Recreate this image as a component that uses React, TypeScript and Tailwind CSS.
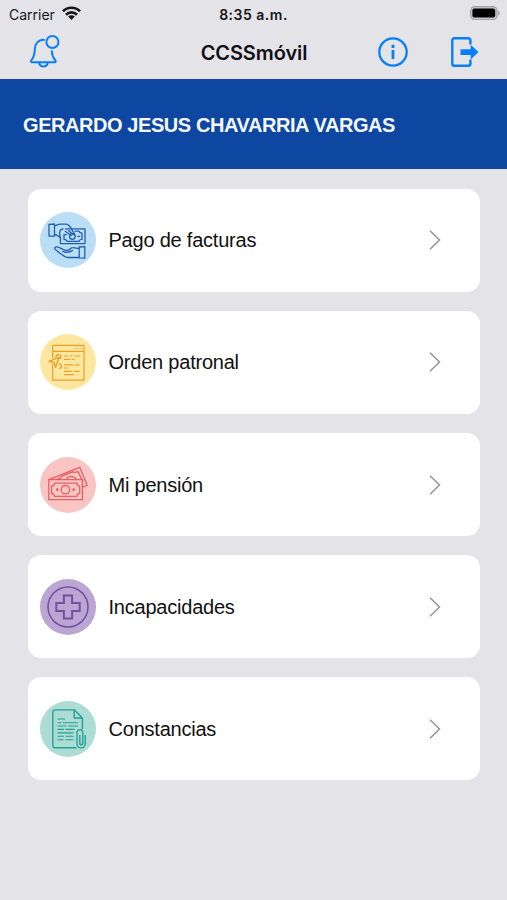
import React from 'react';

function StatusBar() {
  return (
    <div className="flex h-7 items-center justify-between pl-[9px] pr-[7px] text-[#17171a]">
      <div className="flex w-[160px] items-center gap-[6px]">
        <span className="w-[47px] whitespace-nowrap font-['Inter',sans-serif] text-[14px]">Carrier</span>
        <svg className="h-[14px] w-[19px] shrink-0 -translate-y-px" viewBox="0 0 19 14" fill="none" stroke="currentColor" strokeWidth="2.7">
          <path d="M1 5.3a12 12 0 0 1 17 0" />
          <path d="M4 8.7a7.8 7.8 0 0 1 11 0" />
          <path d="M6.2 10.6a4.5 4.5 0 0 1 6.6 0L9.5 14z" fill="currentColor" stroke="none" />
        </svg>
      </div>
      <span className="-ml-[2px] whitespace-nowrap font-['Inter',sans-serif] text-[14px] font-semibold tracking-[0.5px]">8:35 a.m.</span>
      <div className="flex w-[160px] justify-end pb-[2px]">
        <svg className="h-[14px] w-[30px]" viewBox="0 0 30 14">
          <rect x=".7" y=".7" width="26.3" height="12.8" rx="3.8" fill="#c7c7c9" stroke="#a5a5a8" strokeWidth="1.2" />
          <rect x="2.4" y="2.4" width="22.8" height="9.2" rx="2" fill="#000" />
          <path d="M28 4.6c2.2.8 2.2 4.2 0 5z" fill="#a5a5a8" />
        </svg>
      </div>
    </div>
  );
}

function NavBar() {
  return (
    <header className="flex h-[51px] items-center justify-between pl-[29.5px] pr-[28.5px] pb-[3px] text-[#087ffa]">
      <div className="flex w-[106px] pb-[2px]">
        <svg className="h-[33px] w-[30px]" viewBox="0 0 30 33" fill="none" stroke="currentColor" strokeWidth="2" strokeLinecap="round" strokeLinejoin="round">
          <circle cx="22.4" cy="7" r="6" />
          <path d="M14 4.8C8.2 4.9 5 8.8 4.8 14.2c-.1 5.4-.8 7.8-3.4 11-.7.9-.5 2 .6 2h22.7c1.1 0 1.4-.9.7-1.8-2.7-3.2-3.6-5.5-3.5-9.2" />
          <path d="M9.3 28c.7 4.6 7.5 4.6 8.2 0" />
        </svg>
      </div>
      <h1 className="whitespace-nowrap pt-px font-['Inter',sans-serif] text-[20px] font-semibold tracking-[-0.1px] text-[#101014]">CCSSmóvil</h1>
      <div className="flex w-[106px] items-center justify-end gap-[43px]">
        <svg className="h-[30px] w-[30px] shrink-0" viewBox="0 0 30 30" fill="none" stroke="currentColor" strokeWidth="2.3">
          <circle cx="15" cy="15" r="13.7" />
          <path d="M15 13v9M15 7.8v3.1" strokeWidth="2.8" />
        </svg>
        <svg className="h-[30px] w-[28px] shrink-0" viewBox="0 0 28 30" fill="none" stroke="currentColor" strokeWidth="2.4">
          <path d="M19.4 7.4V3.2a2 2 0 0 0-2-2H3.3a2 2 0 0 0-2 2v23.6a2 2 0 0 0 2 2h14.1a2 2 0 0 0 2-2v-4.2" />
          <path d="M9.5 12.2h10.2V7.8l7.8 7.3-7.8 7.3V18H9.5z" fill="currentColor" stroke="none" />
        </svg>
      </div>
    </header>
  );
}

function PaymentIcon() {
  return (
    <svg className="h-14 w-14" viewBox="0 0 56 56" fill="none" stroke="#245eaa" strokeWidth="1.3" strokeLinejoin="round" strokeLinecap="round">
      <circle cx="28" cy="28" r="28" fill="#badef6" stroke="none" />
      <path d="M9 12.3l5.5-.3v12.2L9 24z" />
      <path d="M14.7 13.7c3-1 4-1.7 6.2-1.5h5.6c1.8 0 3.2 2.4 5.4 4.8" />
      <path d="M14.7 22.5c3.4 0 3.1 2.6 5.5 2.6M23 17c-3.1 0-4.2 3.5-2.8 7.8" />
      <path d="M25.5 16.8H45v14.8H20.4v-6.5" />
      <path d="M25.2 19.3l6 4.2M31.4 17.2l3.3 5.2M28.5 18.5l4.8 4.2" />
      <path d="M26.4 22.6H24v4.7c1.8 0 2.7.8 3 2h12c.3-1.3 1.2-2 3-2v-6.2c-1.8 0-2.7-.7-3-2h-4" />
      <circle cx="32.4" cy="24.5" r="2.8" />
      <path d="M37.8 24.3h1.8" />
      <path d="M39.2 35l5.6-.4v11.5l-5.6-.3z" />
      <path d="M39.2 36.3c-2.6.5-3.2-.8-6.2-.7-2.2 0-2.6 1.5-4.1 2.2-1.4.7-3.2.7-5.5-.2-3.5-1.5-5.2-3-7.1-2.8-1.8.3-2.1 1.9-.7 3 3.8 3.2 7.8 6.3 11.3 7.7h12.2" />
      <path d="M22.8 39.4c3.5 1.5 7 .9 9.8-1" />
    </svg>
  );
}

function OrderIcon() {
  return (
    <svg className="h-14 w-14" viewBox="0 0 56 56" fill="none" stroke="#eaa126" strokeWidth="1.2" strokeLinejoin="round">
      <circle cx="28" cy="28" r="28" fill="#fde7a0" stroke="none" />
      <path d="M12.7 24V11.4H44v34.8H12.7V30M12.7 17.4H44" />
      <path d="M34.5 14.5h1.2M37.5 14.5h1.2M40.5 14.5h1.2" />
      <path d="M9 27.3l10-3.9-3.4 9.8-1.4-4.5z" strokeWidth="1.4" />
      <path d="M16 23.1c-.2-3 4.5-3.2 4.8-.5.2 1.2-.6 2-1.8 2M19 30c3.2-.2 3.2 4.5.2 4.5" strokeWidth="1.4" />
      <path d="M24 22h4M29.5 22h3M34 22h6.5M24 25.3h6M31.5 25.3h3M24 30.8h9M35 30.8h4.5M24 34h4.5M24 37.3h8M33.5 37.3h6M24 40.7h10" />
    </svg>
  );
}

function PensionIcon() {
  return (
    <svg className="h-14 w-14" viewBox="0 0 56 56" fill="none" stroke="#e85f66" strokeWidth="1.3">
      <circle cx="28" cy="28" r="28" fill="#f8c5c3" stroke="none" />
      <path d="M8.8 22.7h33.6v20H8.8z" />
      <path d="M8.8 22.7l31-12.4 7.4 18-4.8 1.7" />
      <path d="M16.3 22.4c3-.2 4.8-1.5 5.5-3.3l11-4.3c1.6.8 3.2.7 5.2-.2l3.9 8.2" />
      <path d="M26 22.5c1.8-4 7.8-4.5 10.5 0" />
      <path d="M14.6 26.1h22.1c.2 1.8 1.1 2.8 3 3v7.2c-1.8.2-2.8 1.1-3 3H14.6c-.2-1.8-1.1-2.8-3-3v-7.2c1.8-.2 2.8-1.2 3-3z" />
      <circle cx="25.4" cy="32.7" r="4.2" />
      <circle cx="17.2" cy="32.7" r=".7" />
      <circle cx="33.6" cy="32.7" r=".7" />
    </svg>
  );
}

function DisabilityIcon() {
  return (
    <svg className="h-14 w-14" viewBox="0 0 56 56" fill="none" stroke="#71519f">
      <circle cx="28" cy="28" r="28" fill="#bba5d3" stroke="none" />
      <circle cx="28" cy="28" r="20" strokeWidth="1.5" />
      <path d="M23.9 16.5h8.2v7.4h7.6v8.2h-7.6v7.4h-8.2v-7.4h-7.6v-8.2h7.6z" strokeWidth="2" />
    </svg>
  );
}

function CertificateIcon() {
  return (
    <svg className="h-14 w-14" viewBox="0 0 56 56" fill="none" stroke="#229f98" strokeWidth="1.35" strokeLinejoin="round">
      <circle cx="28" cy="28" r="28" fill="#acdcd3" stroke="none" />
      <path d="M36.7 46.7H15a2.2 2.2 0 0 1-2.2-2.2V11A2.2 2.2 0 0 1 15 8.8h19.2l8.2 8.2v11.2" />
      <path d="M34.2 8.8V17h8.2" />
      <path d="M17.5 18h7.5M17.5 21.7h4M23 21.7h15M17.5 25h9M28 25h10M17.5 28.4h6.5M25.5 28.4h9M17.5 31.8h16M17.5 35.2h6.5M25.5 35.2h8M17.5 38.7h6M25.5 38.7h8" strokeWidth="1.15" />
      <path d="M45.2 34v8.8a4.1 4.1 0 0 1-8.2 0V31.5a2.9 2.9 0 0 1 5.8 0v10.8a1.5 1.5 0 0 1-3 0V34" />
    </svg>
  );
}

const services = [
  { label: 'Pago de facturas', icon: PaymentIcon },
  { label: 'Orden patronal', icon: OrderIcon },
  { label: 'Mi pensión', icon: PensionIcon },
  { label: 'Incapacidades', icon: DisabilityIcon },
  { label: 'Constancias', icon: CertificateIcon },
];

export default function App() {
  return (
    <div className="h-[900px] w-[507px] overflow-hidden bg-[#e4e3e8] font-['Liberation_Sans',sans-serif]">
      <StatusBar />
      <NavBar />

      <div className="flex h-[90px] items-center bg-[#0d47a1] pl-[23px] pt-[2px]">
        <h2 className="whitespace-nowrap text-[20px] font-bold tracking-[-0.43px] text-[#f4f7fc]">GERARDO JESUS CHAVARRIA VARGAS</h2>
      </div>

      <main className="flex flex-col gap-[19.3px] pl-[28px] pr-[27px] pt-[20px]">
        {services.map(({ label, icon: Icon }) => (
          <button key={label} className="flex h-[102.8px] w-full items-center rounded-[13px] bg-white pl-[12px] pr-[39px] text-left">
            <Icon />
            <span className="ml-[12.5px] flex-1 whitespace-nowrap text-[20px] tracking-[-0.22px] text-[#111]">{label}</span>
            <svg className="h-5 w-3" viewBox="0 0 12 20" fill="none" stroke="#959595" strokeWidth="1.5">
              <path d="M1 .8l9.5 9.2L1 19.2" />
            </svg>
          </button>
        ))}
      </main>
    </div>
  );
}
